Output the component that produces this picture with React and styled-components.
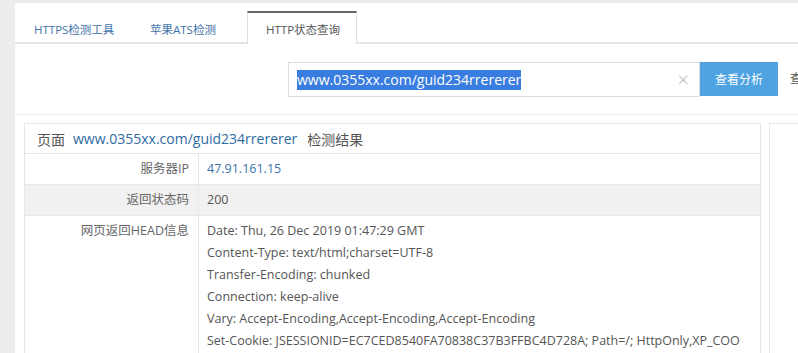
import React from 'react';
import styled, { createGlobalStyle } from 'styled-components';

const GlobalStyle = createGlobalStyle`
  html, body {
    margin: 0;
    padding: 0;
    background: #ececec;
    overflow: hidden;
  }
  body {
    font-family: 'Open Sans', 'Noto Sans CJK SC', sans-serif;
    color: #555;
  }
`;

const Page = styled.div`
  padding: 3px 0 0 15px;
  width: 830px;
`;

const Panel = styled.div`
  background: #fff;
  min-height: 350px;
`;

const TabBar = styled.div`
  display: flex;
  align-items: flex-end;
  height: 39px;
  border-bottom: 2px solid #e4e4e4;
`;

const Tab = styled.div`
  box-sizing: border-box;
  width: ${p => p.$w}px;
  padding-left: 18px;
  display: flex;
  align-items: center;
  font-size: 11.5px;
  color: ${p => (p.$active ? '#555' : '#3f73a8')};
  background: #fff;
  margin-bottom: ${p => (p.$active ? '-2px' : '0')};
  border-top: 2px solid ${p => (p.$active ? '#666' : 'transparent')};
  border-left: 1px solid ${p => (p.$active ? '#ddd' : 'transparent')};
  border-right: 1px solid ${p => (p.$active ? '#ddd' : 'transparent')};
  height: ${p => (p.$active ? '33px' : '31px')};
  padding-top: ${p => (p.$active ? '0' : '2px')};
`;

const SearchRow = styled.div`
  display: flex;
  align-items: flex-start;
  padding: 18px 0 0 273px;
  height: 52px;
  border-bottom: 1px solid #eee;
`;

const InputBox = styled.div`
  box-sizing: border-box;
  flex-shrink: 0;
  width: 412px;
  height: 35px;
  border: 1px solid #ddd;
  display: flex;
  align-items: center;
  padding: 0 10px 0 8px;
`;

const Selected = styled.span`
  background: #3a7de0;
  color: #fff;
  font-size: 14px;
  line-height: 20px;
  white-space: nowrap;
`;

const Clear = styled.span`
  margin-left: auto;
  color: #b5b5b5;
  font-size: 20px;
  font-weight: 300;
  line-height: 1;
`;

const Button = styled.div`
  flex-shrink: 0;
  width: 78px;
  height: 34px;
  background: #4fa3e1;
  color: #fff;
  font-size: 12px;
  display: flex;
  align-items: center;
  justify-content: center;
`;

const Extra = styled.span`
  flex-shrink: 0;
  margin-left: 12px;
  line-height: 34px;
  font-size: 12px;
  color: #555;
  white-space: nowrap;
`;

const Results = styled.div`
  display: flex;
  gap: 8px;
  padding: 8px 0 0 9px;
`;

const Card = styled.div`
  box-sizing: border-box;
  width: ${p => p.$w}px;
  border: 1px solid #e6e6e6;
  height: 240px;
  flex-shrink: 0;
  overflow: hidden;
`;

const CardHead = styled.div`
  height: 29px;
  border-bottom: 1px solid #e8e8e8;
  display: flex;
  align-items: center;
  padding-left: 12px;
  font-size: 14px;
  white-space: nowrap;
  color: #555;
`;

const Link = styled.span`
  color: #2f6ba3;
  margin: 0 10px 0 8px;
`;

const Row = styled.div`
  display: grid;
  grid-template-columns: 174px minmax(0, 1fr);
  background: ${p => (p.$alt ? '#f1f1f1' : '#fff')};
  border-bottom: 1px solid #e8e8e8;
  font-size: 12.5px;
`;

const Label = styled.div`
  text-align: right;
  padding: ${p => (p.$top ? '4px 9px 0 0' : '0 9px 0 0')};
  line-height: ${p => (p.$top ? '22px' : '30px')};
  color: #666;
  border-right: 1px solid #e8e8e8;
`;

const Value = styled.div`
  min-width: 0;
  padding: ${p => (p.$top ? '4px 18px 0 8px' : '0 18px 0 8px')};
  line-height: ${p => (p.$top ? '22px' : '30px')};
  color: ${p => (p.$link ? '#3a72ac' : '#555')};
  word-break: break-all;
`;

const headers = [
  'Date: Thu, 26 Dec 2019 01:47:29 GMT',
  'Content-Type: text/html;charset=UTF-8',
  'Transfer-Encoding: chunked',
  'Connection: keep-alive',
  'Vary: Accept-Encoding,Accept-Encoding,Accept-Encoding',
  'Set-Cookie: JSESSIONID=EC7CED8540FA70838C37B3FFBC4D728A; Path=/; HttpOnly,XP_COOKIE=1',
];

export default function App() {
  return (
    <>
      <GlobalStyle />
      <Page>
        <Panel>
          <TabBar>
            <Tab $w={116}>HTTPS检测工具</Tab>
            <Tab $w={116}>苹果ATS检测</Tab>
            <Tab $w={110} $active>HTTP状态查询</Tab>
          </TabBar>

          <SearchRow>
            <InputBox>
              <Selected>www.0355xx.com/guid234rrererer</Selected>
              <Clear>×</Clear>
            </InputBox>
            <Button>查看分析</Button>
            <Extra>查看历史</Extra>
          </SearchRow>

          <Results>
            <Card $w={737}>
              <CardHead>
                页面<Link>www.0355xx.com/guid234rrererer</Link>检测结果
              </CardHead>
              <Row>
                <Label>服务器IP</Label>
                <Value $link>47.91.161.15</Value>
              </Row>
              <Row $alt>
                <Label>返回状态码</Label>
                <Value>200</Value>
              </Row>
              <Row>
                <Label $top>网页返回HEAD信息</Label>
                <Value $top>
                  {headers.map(h => (
                    <div key={h}>{h}</div>
                  ))}
                </Value>
              </Row>
            </Card>
            <Card $w={60} />
          </Results>
        </Panel>
      </Page>
    </>
  );
}
